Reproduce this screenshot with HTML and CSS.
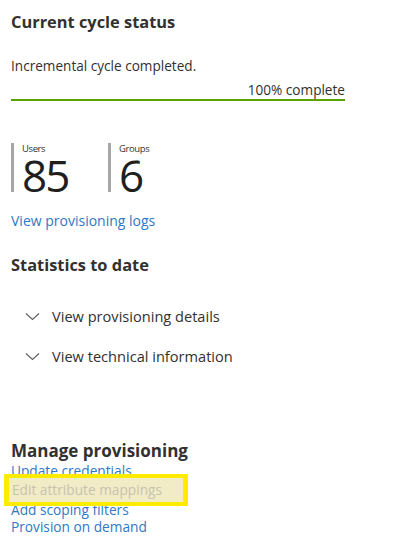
FILE: index.html
```html
<!DOCTYPE html>
<html lang="en">
<head>
  <meta charset="UTF-8">
  <title>Provisioning</title>
  <link rel="stylesheet" href="styles.css">
</head>
<body>
  <div class="page">
    <h2 class="title">Current cycle status</h2>
    <p class="status">Incremental cycle completed.</p>
    <div class="progress">
      <span class="progress-label">100% complete</span>
      <div class="progress-bar"></div>
    </div>

    <div class="counts">
      <div class="count">
        <span class="count-label">Users</span>
        <span class="count-value">85</span>
      </div>
      <div class="count">
        <span class="count-label">Groups</span>
        <span class="count-value">6</span>
      </div>
    </div>
    <a class="link" href="#">View provisioning logs</a>

    <h2 class="title stats-title">Statistics to date</h2>
    <div class="expander">
      <svg class="chevron" width="15" height="9" viewBox="0 0 15 9"><path d="M1 1.5l6.5 6 6.5-6" fill="none" stroke="#605e5c" stroke-width="1.1"/></svg>
      <span>View provisioning details</span>
    </div>
    <div class="expander">
      <svg class="chevron" width="15" height="9" viewBox="0 0 15 9"><path d="M1 1.5l6.5 6 6.5-6" fill="none" stroke="#605e5c" stroke-width="1.1"/></svg>
      <span>View technical information</span>
    </div>

    <h2 class="title manage-title">Manage provisioning</h2>
    <div class="manage">
      <a class="link tight first" href="#">Update credentials</a>
      <div class="highlight"><a class="link disabled" href="#">Edit attribute mappings</a></div>
      <a class="link tight" href="#">Add scoping filters</a>
      <a class="link tight" href="#">Provision on demand</a>
    </div>
  </div>
</body>
</html>
```

FILE: styles.css
```css
body {
  margin: 0px;
  background-color: #ffffff;
  font-family: 'Open Sans', 'Noto Sans', sans-serif;
  color: #323130;
}

.page {
  padding: 10px 11px 0px 11px;
  width: 334px;
}

.title {
  margin: 0px;
  font-size: 16.4px;
  font-weight: 700;
  line-height: 24px;
}

.status {
  margin: 0px;
  margin-top: 23px;
  font-size: 13.6px;
  line-height: 18px;
}

.progress {
  margin-top: 6px;
  display: flex;
  flex-direction: column;
  align-items: flex-end;
}

.progress-label {
  font-size: 13.6px;
  line-height: 17px;
}

.progress-bar {
  width: 100%;
  height: 2px;
  margin-top: 1px;
  background-color: #57a300;
}

.counts {
  margin-top: 42px;
  display: flex;
}

.count {
  display: flex;
  flex-direction: column;
  border-left: 3px solid #a6a6a6;
  padding-left: 8px;
  width: 86px;
  height: 49px;
}

.count-label {
  font-size: 9.5px;
  line-height: 12px;
  letter-spacing: -0.4px;
}

.count-value {
  font-size: 44px;
  line-height: 38px;
  margin-top: 1px;
  color: #201f1e;
  letter-spacing: -2px;
}

.link {
  display: block;
  color: #2f78c4;
  text-decoration: none;
  font-size: 14px;
  line-height: 18px;
}

.counts + .link {
  margin-top: 20px;
}

.stats-title {
  margin-top: 23px;
}

.expander {
  display: flex;
  align-items: center;
  margin-left: 14px;
  gap: 12px;
  font-size: 14.6px;
  line-height: 20px;
}

.stats-title + .expander {
  margin-top: 29px;
}

.expander + .expander {
  margin-top: 20px;
}

.manage-title {
  margin-top: 74px;
  font-size: 17px;
  line-height: 22px;
}

.manage .link {
  font-size: 13.7px;
}

.tight {
  line-height: 17px;
  height: 17px;
}

.first {
  height: 12px;
  overflow: hidden;
}

.highlight {
  margin-left: -7px;
  width: 171px;
  height: 24px;
  border: 4px solid #ffeb00;
  border-left-width: 5px;
  border-right-width: 5px;
  padding-left: 3px;
  background-color: #f1ebc6;
  margin-bottom: -5px;
  position: relative;
}

.disabled {
  color: #c8c3b0;
  line-height: 24px;
}
```
